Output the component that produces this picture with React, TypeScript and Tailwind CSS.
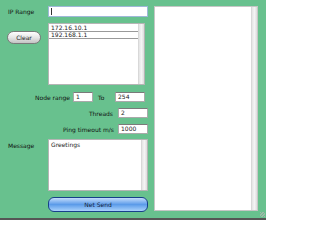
import React from "react";

const font = { fontFamily: '"DejaVu Sans", Verdana, sans-serif' };

function Field({ value, className }: { value: string; className: string }) {
  return (
    <div
      className={`h-[10px] bg-white border border-[#a9a9a9] border-t-[#7a7a7a] text-[6px] leading-[8px] pl-[2px] text-[#222] ${className}`}
    >
      {value}
    </div>
  );
}

function Scroll() {
  return <div className="w-[6px] self-stretch bg-gradient-to-r from-[#e4e4e4] via-[#f4f4f4] to-[#dcdcdc] border-l border-[#d8d8d8]" />;
}

export default function App() {
  return (
    <div className="w-[266px] h-[220px] bg-[#68c18e] relative overflow-hidden text-[#111]" style={font}>
      <div className="flex pt-[6px]">
        {/* left column */}
        <div className="w-[148px] flex flex-col">
          <div className="flex items-center h-[11px]">
            <span className="w-[48px] pl-[8px] text-[6px]">IP Range</span>
            <div className="w-[100px] h-[11px] bg-white border border-[#9fb8d8] flex items-center pl-[2px]">
              <div className="w-px h-[7px] bg-[#333]" />
            </div>
          </div>

          <div className="flex mt-[6px]">
            <div className="w-[48px] pl-[7px]">
              <button className="w-[34px] h-[13px] rounded-full border border-[#7a7a7a] bg-gradient-to-b from-[#ffffff] via-[#e6e6e6] to-[#c4c4c4] text-[6px] text-[#222] leading-[11px]">
                Clear
              </button>
            </div>
            <div className="w-[97px] h-[62px] bg-white border border-[#b5b5b5] flex">
              <div className="flex-1 flex flex-col pt-px">
                <div className="h-[7px] border-b border-[#9a9a9a] text-[6px] leading-[6px] pl-[2px] text-[#222]">172.16.10.1</div>
                <div className="h-[7px] border-b border-[#9a9a9a] text-[6px] leading-[6px] pl-[2px] text-[#222]">192.168.1.1</div>
              </div>
              <Scroll />
            </div>
          </div>

          <div className="flex items-center mt-[7px] h-[10px]">
            <span className="w-[73px] text-right pr-[3px] text-[6px]">Node range</span>
            <Field value="1" className="w-[20px]" />
            <span className="w-[22px] pl-[5px] text-[6px]">To</span>
            <Field value="254" className="w-[30px]" />
          </div>

          <div className="flex items-center mt-[6px] h-[10px]">
            <span className="w-[118px] text-right pr-[5px] text-[6px]">Threads</span>
            <Field value="2" className="w-[30px]" />
          </div>

          <div className="flex items-center mt-[6px] h-[10px]">
            <span className="w-[118px] text-right pr-[4px] text-[6px]">Ping timeout m/s</span>
            <Field value="1000" className="w-[30px]" />
          </div>

          <div className="flex mt-[5px]">
            <span className="w-[48px] pl-[8px] text-[6px] pt-[2px]">Message</span>
            <div className="w-[100px] h-[52px] bg-white border border-[#b5b5b5] flex">
              <div className="flex-1 text-[6px] leading-[8px] pl-[2px] pt-px text-[#222]">Greetings</div>
              <Scroll />
            </div>
          </div>

          <div className="flex mt-[6px]">
            <div className="w-[48px]" />
            <button className="w-[100px] h-[15px] rounded-[6px] border border-[#173f8a] bg-gradient-to-b from-[#c4dcfa] via-[#5b9be9] to-[#a9d2fb] text-[6px] text-[#14213a] leading-[13px]">
              Net Send
            </button>
          </div>
        </div>

        {/* right panel */}
        <div className="ml-[6px] w-[104px] h-[205px] bg-white border border-[#c6c6c6] flex">
          <div className="flex-1" />
          <Scroll />
        </div>
      </div>

      <div className="absolute right-[1px] bottom-[3px] w-[5px] h-[5px] bg-[repeating-linear-gradient(135deg,#9fb8a8_0px,#9fb8a8_1px,transparent_1px,transparent_2px)]" />
      <div className="absolute left-0 right-0 bottom-0 h-[2px] bg-[#555]" />
    </div>
  );
}
